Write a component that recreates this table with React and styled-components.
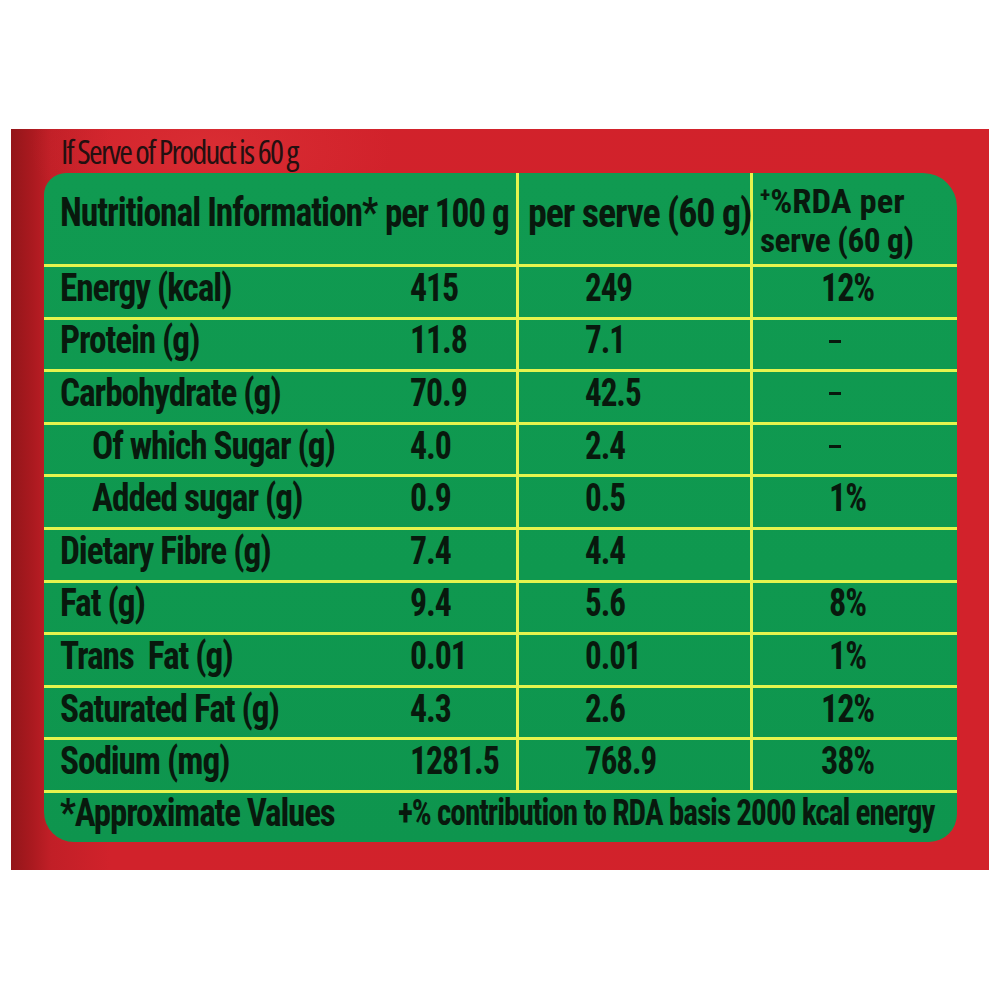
import React from "react";
import styled, { createGlobalStyle } from "styled-components";

const LINE = "#e4f44e";
const INK = "#08190d";

const GlobalStyle = createGlobalStyle`
  html, body { margin: 0; padding: 0; background: #ffffff; }
  #root { width: 1000px; height: 1000px; }
`;

const Page = styled.div`
  box-sizing: border-box;
  width: 1000px;
  height: 1000px;
  padding: 129px 0 0 11px;
  background: #ffffff;
`;

const Panel = styled.section`
  box-sizing: border-box;
  width: 978px;
  height: 741px;
  padding: 0 32px 28px 33px;
  display: flex;
  flex-direction: column;
  background:
    radial-gradient(ellipse 260px 120px at 200px 20px, rgba(235, 70, 70, 0.3), rgba(235, 70, 70, 0) 70%),
    linear-gradient(90deg, #93161a 0px, #a9191f 20px, #c11f27 40px, #d1222b 100px, #d2222b 100%);
`;

const Caption = styled.div`
  height: 44px;
  display: flex;
  align-items: center;
  padding-left: 17px;
  font-family: "Open Sans", "Liberation Sans", sans-serif;
  font-stretch: 75%;
  font-weight: 400;
  font-size: 33px;
  letter-spacing: -1.8px;
  line-height: 1;
  color: #241010;
  white-space: nowrap;
`;

const Table = styled.div`
  flex: 1;
  display: flex;
  flex-direction: column;
  overflow: hidden;
  border-radius: 22px 34px 28px 30px;
  background: linear-gradient(180deg, #109a51 0%, #0f984f 60%, #0e954e 100%);
  font-family: Roboto, "Liberation Sans", sans-serif;
  font-stretch: 75%;
  font-weight: 700;
  color: ${INK};
`;

const Row = styled.div`
  box-sizing: border-box;
  display: grid;
  grid-template-columns: ${(p) => (p.$footer ? "340px 1fr" : "340px 132px 234px 1fr")};
  height: ${(p) => p.$h}px;
  border-top: ${(p) => (p.$first ? "none" : `3px solid ${LINE}`)};
`;

const Cell = styled.div`
  box-sizing: border-box;
  min-width: 0;
  display: flex;
  flex-direction: column;
  justify-content: center;
  align-items: ${(p) => (p.$center ? "center" : "flex-start")};
  padding-left: ${(p) => p.$pl || 0}px;
  padding-right: ${(p) => p.$pr || 0}px;
  padding-bottom: ${(p) => p.$pb || 0}px;
  border-left: ${(p) => (p.$divider ? `3px solid ${LINE}` : "none")};
`;

const Text = styled.span`
  display: block;
  font-size: ${(p) => p.$size || 38}px;
  line-height: ${(p) => p.$lh || 38}px;
  letter-spacing: ${(p) => (p.$ls != null ? p.$ls : -1.2)}px;
  white-space: pre;
  transform: scaleX(${(p) => p.$sx || 1});
  transform-origin: ${(p) => (p.$center ? "center" : "left")} center;
`;

const Plus = styled.span`
  font-size: 0.62em;
  vertical-align: 0.5em;
  letter-spacing: 0;
`;

const Dash = styled.span`
  display: block;
  width: 12px;
  height: 3px;
  margin-right: 26px;
  margin-top: 2px;
  background: ${INK};
`;

const rows = [
  { label: "Energy (kcal)", a: "415", b: "249", c: "12%" },
  { label: "Protein (g)", a: "11.8", b: "7.1", c: "-" },
  { label: "Carbohydrate (g)", a: "70.9", b: "42.5", c: "-" },
  { label: "Of which Sugar (g)", a: "4.0", b: "2.4", c: "-", indent: true },
  { label: "Added sugar (g)", a: "0.9", b: "0.5", c: "1%", indent: true },
  { label: "Dietary Fibre (g)", a: "7.4", b: "4.4", c: "" },
  { label: "Fat (g)", a: "9.4", b: "5.6", c: "8%" },
  { label: "Trans  Fat (g)", a: "0.01", b: "0.01", c: "1%" },
  { label: "Saturated Fat (g)", a: "4.3", b: "2.6", c: "12%" },
  { label: "Sodium (mg)", a: "1281.5", b: "768.9", c: "38%" },
];

export default function App() {
  return (
    <>
      <GlobalStyle />
      <Page>
        <Panel>
          <Caption>If Serve of Product is 60 g</Caption>
          <Table>
            <Row $first $h={91}>
              <Cell $pl={16} $pb={11}>
                <Text $size={40} $lh={40} $sx={0.89}>Nutritional Information*</Text>
              </Cell>
              <Cell $pl={1} $pb={9}>
                <Text $size={40} $lh={40} $sx={0.88}>per 100 g</Text>
              </Cell>
              <Cell $divider $pl={9} $pb={9}>
                <Text $size={40} $lh={40} $sx={0.95}>per serve (60 g)</Text>
              </Cell>
              <Cell $divider $pl={7} $pb={2}>
                <Text $size={34} $lh={40} $ls={0} $sx={1.02}>
                  <Plus>+</Plus>%RDA per
                </Text>
                <Text $size={34} $lh={40} $ls={-0.6} $sx={0.98}>serve (60 g)</Text>
              </Cell>
            </Row>
            {rows.map((r) => (
              <Row key={r.label} $h={52.6}>
                <Cell $pl={r.indent ? 48 : 16} $pb={8}>
                  <Text $sx={0.93}>{r.label}</Text>
                </Cell>
                <Cell $pl={26} $pb={8}>
                  <Text $sx={0.89}>{r.a}</Text>
                </Cell>
                <Cell $divider $pl={66} $pb={8}>
                  <Text $sx={0.87}>{r.b}</Text>
                </Cell>
                <Cell $divider $center $pr={14} $pb={8}>
                  {r.c === "-" ? <Dash /> : <Text $center $sx={0.9}>{r.c}</Text>}
                </Cell>
              </Row>
            ))}
            <Row $footer $h={52}>
              <Cell $pl={16} $pb={8}>
                <Text $sx={0.92}>*Approximate Values</Text>
              </Cell>
              <Cell $pl={14} $pb={8}>
                <Text $size={37} $sx={0.845}>+% contribution to RDA basis 2000 kcal energy</Text>
              </Cell>
            </Row>
          </Table>
        </Panel>
      </Page>
    </>
  );
}
